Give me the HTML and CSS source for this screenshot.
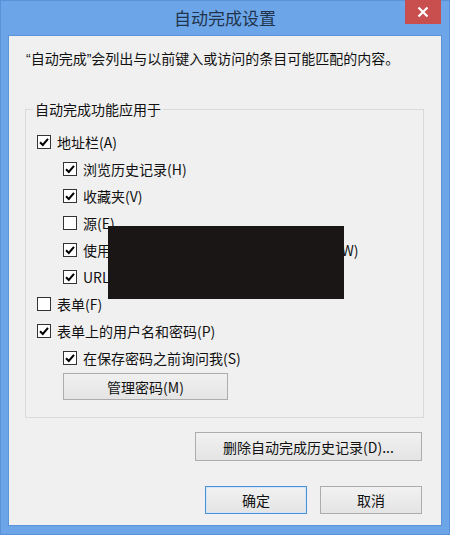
FILE: index.html
```html
<!DOCTYPE html>
<html lang="zh-CN">
<head>
<meta charset="utf-8">
<title>自动完成设置</title>
<link rel="stylesheet" href="styles.css">
</head>
<body>
<div class="window">
  <div class="titlebar">
    <span></span>
    <div class="title">自动完成设置</div>
    <div class="close"><svg width="12" height="12" viewBox="0 0 12 12"><path d="M1.5 1.5 L10.5 10.5 M10.5 1.5 L1.5 10.5" stroke="#fff" stroke-width="2.2" fill="none"/></svg></div>
  </div>
  <div class="client">
    <p class="desc"><span class="q">“</span>自动完成<span class="q">”</span>会列出与以前键入或访问的条目可能匹配的内容。</p>
    <fieldset class="group">
      <legend>自动完成功能应用于</legend>
      <div class="row lvl1"><span class="cb on"></span><span>地址栏(A)</span></div>
      <div class="row lvl2"><span class="cb on"></span><span>浏览历史记录(H)</span></div>
      <div class="row lvl2"><span class="cb on"></span><span>收藏夹(V)</span></div>
      <div class="row lvl2"><span class="cb"></span><span>源(E)</span></div>
      <div class="row lvl2"><span class="cb on"></span><span>使用 Windows Search 以获得更好的结果(W)</span></div>
      <div class="row lvl2"><span class="cb on"></span><span>URL 建议(U)</span></div>
      <div class="row lvl1"><span class="cb"></span><span>表单(F)</span></div>
      <div class="row lvl1"><span class="cb on"></span><span>表单上的用户名和密码(P)</span></div>
      <div class="row lvl2"><span class="cb on"></span><span>在保存密码之前询问我(S)</span></div>
      <div class="btn manage">管理密码(M)</div>
      <div class="redact"></div>
    </fieldset>
    <div class="actions">
      <div class="btn wide">删除自动完成历史记录(D)...</div>
    </div>
    <div class="actions final">
      <div class="btn ok">确定</div>
      <div class="btn cancel">取消</div>
    </div>
  </div>
</div>
</body>
</html>
```
FILE: styles.css
```css
html, body {
  margin: 0;
  padding: 0;
}
body {
  font-family: "Noto Sans CJK SC", "Noto Sans", sans-serif;
  font-size: 14px;
  color: #111;
}
.window {
  box-sizing: border-box;
  width: 450px;
  height: 535px;
  background: #6ca6e9;
  border: 1px solid #5a92d9;
  padding: 0 8px 9px 8px;
  display: flex;
  flex-direction: column;
}
.titlebar {
  height: 35px;
  display: grid;
  grid-template-columns: 1fr auto 1fr;
}
.title {
  align-self: center;
  font-size: 17px;
  color: #22344c;
  line-height: 22px;
  margin-top: -1px;
}
.close {
  justify-self: end;
  align-self: start;
  width: 36px;
  height: 24px;
  margin-top: -1px;
  background: #c94f4f;
  display: flex;
  align-items: center;
  justify-content: center;
}
.client {
  flex: 1;
  background: #f0f0f0;
  box-shadow: 0 0 0 1px #5b93d8;
  padding-top: 12px;
}
.desc {
  margin: 0 0 30px 17px;
  line-height: 20px;
}
.q {
  font-family: "Liberation Sans", sans-serif;
}
.group {
  position: relative;
  box-sizing: border-box;
  width: 399px;
  margin: 0 0 0 16px;
  border: 1px solid #dadada;
  padding: 9px 0 17px 7px;
  min-width: 0;
}
.group legend {
  padding: 0 2px;
  line-height: 20px;
}
.row {
  height: 27px;
  display: flex;
  align-items: center;
  gap: 6px;
  white-space: nowrap;
}
.lvl1 { margin-left: 4px; }
.lvl2 { margin-left: 30px; }
.cb {
  box-sizing: border-box;
  width: 14px;
  height: 14px;
  border: 1px solid #333;
  background: #fff;
  flex: none;
}
.cb.on {
  background: #fff url("data:image/svg+xml,%3Csvg xmlns='http://www.w3.org/2000/svg' width='12' height='12' viewBox='0 0 12 12'%3E%3Cpath d='M2 6.2 L4.8 9 L10 2.8' stroke='%23000' stroke-width='2' fill='none'/%3E%3C/svg%3E") center / 12px 12px no-repeat;
}
.btn {
  box-sizing: border-box;
  display: flex;
  align-items: center;
  justify-content: center;
  border: 1px solid #acacac;
  background: linear-gradient(#f1f1f1, #e4e4e4);
  color: #111;
}
.manage {
  width: 165px;
  height: 27px;
  margin: 2px 0 0 30px;
}
.redact {
  position: absolute;
  left: 82px;
  top: 107px;
  width: 236px;
  height: 73px;
  background: #1b1616;
}
.actions {
  display: flex;
  justify-content: flex-end;
  gap: 13px;
  margin: 14px 19px 0 0;
}
.wide {
  width: 227px;
  height: 29px;
}
.final {
  margin-top: 25px;
}
.ok, .cancel {
  width: 102px;
  height: 28px;
}
.ok {
  border-color: #4a90d9;
  box-shadow: inset 0 0 0 1px #d4e6f8;
}
```
